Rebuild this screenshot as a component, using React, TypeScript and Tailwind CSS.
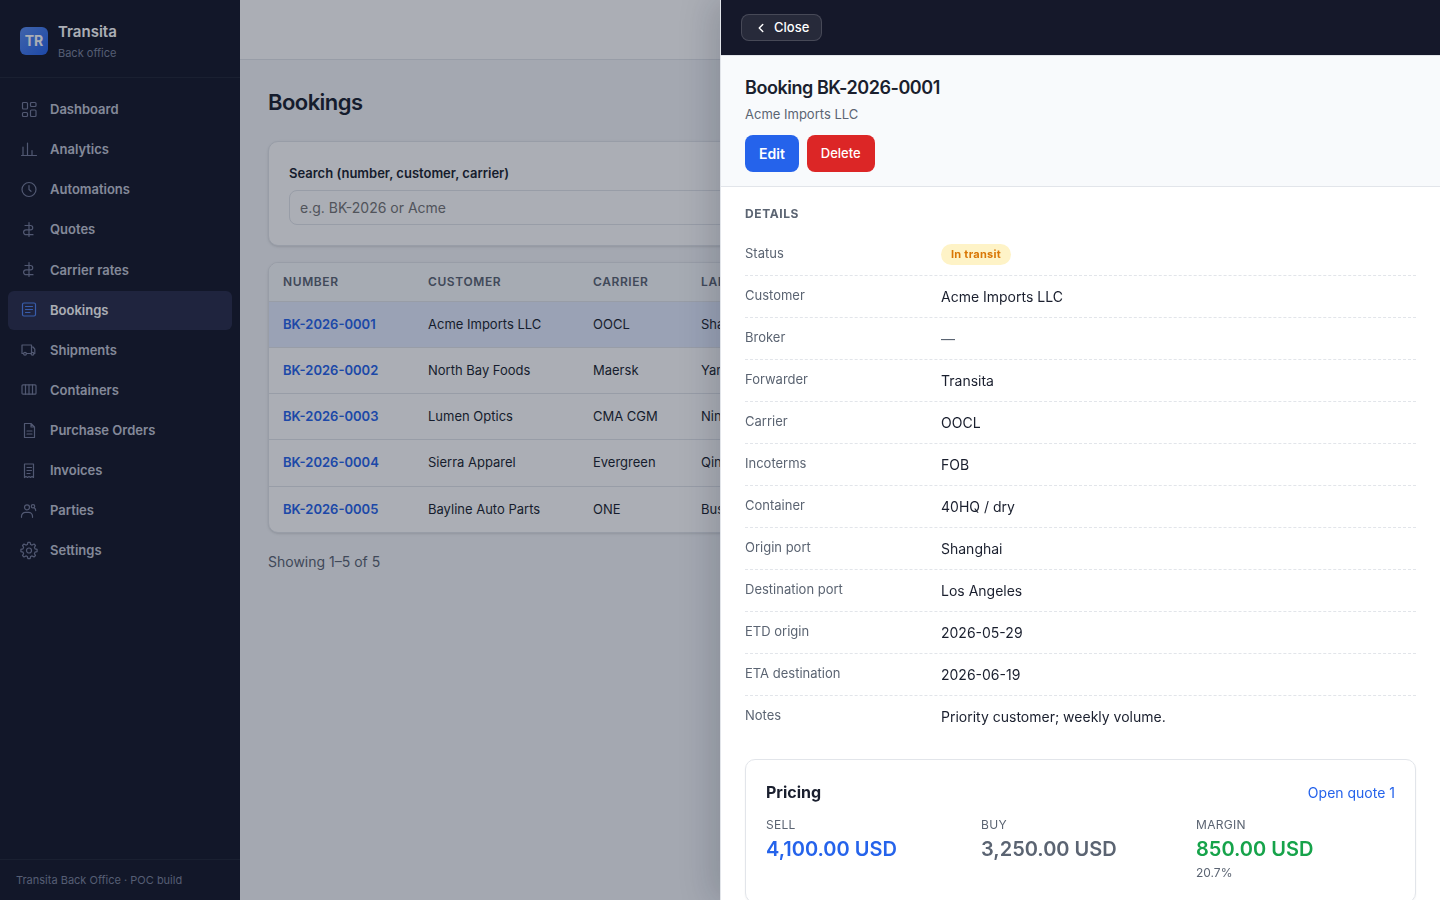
import type { ReactNode } from "react";
import { ChevronLeft } from "lucide-react";

const icons: Record<string, ReactNode> = {
  dashboard: (
    <>
      <rect x="2.5" y="2.5" width="5" height="6.5" rx="1" />
      <rect x="10.5" y="2.5" width="5.5" height="4" rx="1" />
      <rect x="2.500" y="12.5" width="5" height="4" rx="1" />
      <rect x="10.5" y="10" width="5.500" height="6.500" rx="1" />
    </>
  ),
  analytics: <path d="M1.5 15.5h15M3 15.5V7M7.500 15.5V3M12 15.500v-5" />,
  clock: (
    <>
      <circle cx="9" cy="9.500" r="7" />
      <path d="M9 5.500v4l2 1.800" />
    </>
  ),
  rates: (
    <path d="M9 2.5v14M5 5.500h5.500a2.200 2.200 0 0 1 0 4.400H6a2.400 2.400 0 0 0 0 4.800h7" />
  ),
  bookings: (
    <>
      <rect x="2.500" y="3" width="13" height="13" rx="1.500" />
      <path d="M5.500 6.500h7M5.500 9.500h7M5.500 12.500h4.500" />
    </>
  ),
  truck: (
    <>
      <path d="M3.500 13.500H2V5h9.500v8.500H6.500M11.500 7H13l1.800 2.200v4.300H14" />
      <circle cx="5" cy="13.700" r="1.400" />
      <circle cx="12.500" cy="13.700" r="1.400" />
    </>
  ),
  container: (
    <>
      <rect x="2" y="4.800" width="14" height="9.400" rx="1" />
      <path d="M5.500 4.800v9.400M9 4.800v9.400M12.500 4.800v9.400" />
    </>
  ),
  file: (
    <>
      <path d="M4.500 2.500H11l3.500 3.500v10.500h-10zM11 2.500V6h3.500" />
      <path d="M7 10h5M7 13h5" />
    </>
  ),
  receipt: (
    <>
      <path d="M4.500 3h9v13.500l-1.500-1-1.500 1-1.500-1-1.500 1-1.500-1-1.500 1z" />
      <path d="M7 6.500h4.500M7 9.500h4.500M7 12.500h3" />
    </>
  ),
  people: (
    <>
      <circle cx="7" cy="6.300" r="2.500" />
      <path d="M1.500 16.300v-1a4 4 0 0 1 4-4h3a4 4 0 0 1 4 4v1" />
      <circle cx="13" cy="5.300" r="1.700" />
      <path d="M14 6.800c1.200.6 1.700 1.500 1.700 2.800" />
    </>
  ),
  gear: (
    <>
      <circle cx="9" cy="9.500" r="2.500" />
      <path d="M7.900 1.400h2.200l.5 2.100 1.500.6 1.900-1.100 1.500 1.500-1.100 1.900.6 1.500 2.100.5v2.200l-2.100.5-.6 1.500 1.100 1.900-1.500 1.500-1.900-1.100-1.500.6-.5 2.100H7.900l-.5-2.100-1.500-.6L4 16l-1.500-1.500 1.100-1.900-.6-1.500-2.100-.5V8.400L3 7.900l.6-1.500-1.100-1.900L4 3l1.900 1.100 1.500-.6z" />
    </>
  ),
};

const navItems = [
  { label: "Dashboard", icon: "dashboard" },
  { label: "Analytics", icon: "analytics" },
  { label: "Automations", icon: "clock" },
  { label: "Quotes", icon: "rates" },
  { label: "Carrier rates", icon: "rates" },
  { label: "Bookings", icon: "bookings", active: true },
  { label: "Shipments", icon: "truck" },
  { label: "Containers", icon: "container" },
  { label: "Purchase Orders", icon: "file" },
  { label: "Invoices", icon: "receipt" },
  { label: "Parties", icon: "people" },
  { label: "Settings", icon: "gear" },
];

const bookings = [
  ["BK-2026-0001", "Acme Imports LLC", "OOCL", "Shanghai → Los Angeles"],
  ["BK-2026-0002", "North Bay Foods", "Maersk", "Yantian → Oakland"],
  ["BK-2026-0003", "Lumen Optics", "CMA CGM", "Ningbo → Long Beach"],
  ["BK-2026-0004", "Sierra Apparel", "Evergreen", "Qingdao → Seattle"],
  ["BK-2026-0005", "Bayline Auto Parts", "ONE", "Busan → Tacoma"],
];

const details: [string, ReactNode][] = [
  [
    "Status",
    <span className="inline-block rounded-full bg-[#fef3c7] px-[10px] text-[11px] leading-[21px] font-bold tracking-wide text-[#d97706]">
      In transit
    </span>,
  ],
  ["Customer", "Acme Imports LLC"],
  ["Broker", <span className="text-[#5b6472]">—</span>],
  ["Forwarder", "Transita"],
  ["Carrier", "OOCL"],
  ["Incoterms", "FOB"],
  ["Container", "40HQ / dry"],
  ["Origin port", "Shanghai"],
  ["Destination port", "Los Angeles"],
  ["ETD origin", "2026-05-29"],
  ["ETA destination", "2026-06-19"],
  ["Notes", "Priority customer; weekly volume."],
];

function Sidebar() {
  return (
    <aside className="flex w-60 shrink-0 flex-col bg-[#141829]">
      <div className="flex items-center gap-[10px] border-b border-white/6 px-5 pt-5 pb-[15px]">
        <div className="flex size-7 items-center justify-center rounded-md bg-linear-to-br from-[#5b8def] to-[#2563eb] text-sm font-bold text-white">
          TR
        </div>
        <div>
          <div className="text-[15px] leading-6 font-semibold text-white">Transita</div>
          <div className="text-[11px] leading-[18px] text-[#7c839b]">Back office</div>
        </div>
      </div>
      <nav className="flex flex-1 flex-col gap-px px-2 py-3">
        {navItems.map((item) => (
          <a
            key={item.label}
            href="#"
            className={
              item.active
                ? "flex items-center gap-3 rounded-md bg-[#292c49] px-3 py-[9px] text-[13px] leading-relaxed font-semibold text-white"
                : "flex items-center gap-3 rounded-md px-3 py-[9px] text-[13px] leading-relaxed font-semibold text-[#c3c7d4]"
            }
          >
            <svg
              viewBox="0 1 18 18"
              fill="none"
              stroke="currentColor"
              strokeWidth="1.2"
              strokeLinecap="round"
              strokeLinejoin="round"
              className={
                item.active
                  ? "size-[18px] overflow-visible text-[#4f83f1]"
                  : "size-[18px] overflow-visible text-[#767c98]"
              }
            >
              {icons[item.icon]}
            </svg>
            {item.label}
          </a>
        ))}
      </nav>
      <div className="border-t border-white/6 px-4 py-3 text-[11px] leading-4 text-[#7c839b]">
        Transita Back Office · POC build
      </div>
    </aside>
  );
}

function BookingsPage() {
  return (
    <div className="flex min-w-0 flex-1 flex-col">
      <header className="h-15 shrink-0 border-b border-[#e2e5ea] bg-white" />
      <main className="flex-1 p-7">
        <h1 className="text-[22px] leading-7 font-semibold tracking-tight">Bookings</h1>
        <div className="mt-[25px] rounded-[10px] border border-[#e2e5ea] bg-white p-5 shadow-sm">
          <label htmlFor="search" className="block pb-[6px] text-[13px] leading-[22px] font-semibold">
            Search (number, customer, carrier)
          </label>
          <input
            id="search"
            type="search"
            placeholder="e.g. BK-2026 or Acme"
            className="block h-[35px] w-full rounded-lg border border-[#e2e5ea] bg-white px-[10px] text-sm placeholder:text-[#757575]"
          />
        </div>
        <div className="mt-4 overflow-hidden rounded-[10px] border border-[#e2e5ea] bg-white shadow-sm">
          <table className="w-full table-fixed border-collapse text-left">
            <thead className="bg-[#f8fafc] text-[12px] leading-[18px] tracking-wider text-[#5b6472] uppercase">
              <tr className="border-b border-[#e2e5ea]">
                <th className="w-[145px] px-[14px] py-[10px] font-semibold">Number</th>
                <th className="w-[165px] px-[14px] py-[10px] font-semibold">Customer</th>
                <th className="w-[108px] px-[14px] py-[10px] font-semibold">Carrier</th>
                <th className="px-[14px] py-[10px] font-semibold">Lane</th>
              </tr>
            </thead>
            <tbody className="text-[13px] leading-relaxed">
              {bookings.map(([number, customer, carrier, lane], i) => (
                <tr
                  key={number}
                  className={
                    i === 0
                      ? "border-b border-[#e2e5ea] bg-[#e5edff]"
                      : "border-b border-[#e2e5ea] last:border-b-0"
                  }
                >
                  <td className="px-[14px] py-3 font-semibold">
                    <a href="#" className="text-[#2563eb]">{number}</a>
                  </td>
                  <td className="px-[14px] py-3">{customer}</td>
                  <td className="px-[14px] py-3">{carrier}</td>
                  <td className="px-[14px] py-3">{lane}</td>
                </tr>
              ))}
            </tbody>
          </table>
        </div>
        <p className="mt-[18px] text-sm leading-[21px] text-[#5b6472]">Showing 1–5 of 5</p>
      </main>
    </div>
  );
}

function BookingDrawer() {
  return (
    <section
      role="dialog"
      aria-labelledby="drawer-title"
      className="fixed inset-y-0 right-0 flex w-1/2 flex-col border-l border-[#e2e5ea] bg-white shadow-[-8px_0_32px_rgba(15,23,42,0.18)]"
    >
      <div className="shrink-0 bg-[#15182a] px-5 py-[14px]">
        <button
          type="button"
          className="flex h-[27px] items-center gap-[6px] rounded-lg border border-white/15 bg-white/8 px-3 text-[13px] font-medium text-white"
        >
          <ChevronLeft size={14} strokeWidth={2.5} />
          Close
        </button>
      </div>
      <div className="shrink-0 border-y border-[#e2e5ea] bg-[#f8fafc] px-6 pt-[18px] pb-[14px]">
        <h2 id="drawer-title" className="text-lg leading-[27px] font-semibold tracking-tight">
          Booking BK-2026-0001
        </h2>
        <p className="mt-1 text-[13px] leading-[19px] text-[#5b6472]">Acme Imports LLC</p>
        <div className="mt-[11px] flex gap-2">
          <button type="button" className="rounded-lg bg-[#2563eb] px-[14px] py-2 text-[14px] leading-[21px] font-semibold text-white">
            Edit
          </button>
          <button type="button" className="rounded-lg bg-[#dc2626] px-[14px] py-2 text-[13px] leading-[21px] font-medium text-white">
            Delete
          </button>
        </div>
      </div>
      <div className="min-h-0 flex-1 overflow-y-auto px-6 py-[18px] [scrollbar-width:none]">
        <h3 className="mb-[11px] text-[12px] leading-[18px] font-bold tracking-wider text-[#5b6472] uppercase">
          Details
        </h3>
        <dl>
          {details.map(([label, value]) => (
            <div
              key={label}
              className="grid grid-cols-[180px_1fr] gap-4 border-b border-dashed border-[#e2e5ea] py-[10px] last:border-b-0"
            >
              <dt className="text-[13px] leading-[19px] text-[#5b6472]">{label}</dt>
              <dd className="flex text-sm leading-[21px]">{value}</dd>
            </div>
          ))}
        </dl>
        <div className="mt-[22px] rounded-[10px] border border-[#e2e5ea] bg-white p-5 shadow-xs">
          <div className="mb-3 flex items-center justify-between">
            <h3 className="text-base leading-6 font-bold">Pricing</h3>
            <a href="#" className="text-sm leading-[21px] text-[#2563eb]">Open quote 1</a>
          </div>
          <div className="grid grid-cols-3 gap-4 text-[12px] leading-[18px] text-[#5b6472]">
            <div>
              <div className="tracking-wide uppercase">Sell</div>
              <div className="text-xl leading-[30px] font-semibold text-[#2563eb]">4,100.00 USD</div>
            </div>
            <div>
              <div className="tracking-wide uppercase">Buy</div>
              <div className="text-xl leading-[30px] font-semibold">3,250.00 USD</div>
            </div>
            <div>
              <div className="tracking-wide uppercase">Margin</div>
              <div className="text-xl leading-[30px] font-semibold text-[#16a34a]">850.00 USD</div>
              <div>20.7%</div>
            </div>
          </div>
        </div>
      </div>
    </section>
  );
}

export default function App() {
  return (
    <div className="flex min-h-screen bg-[#f4f6f9] font-[Inter,sans-serif] text-[#1a1f2e]">
      <Sidebar />
      <BookingsPage />
      <div className="fixed inset-0 bg-[#0f172a]/35" />
      <BookingDrawer />
    </div>
  );
}
